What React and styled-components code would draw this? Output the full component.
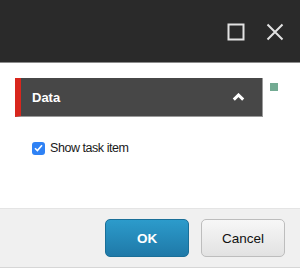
import React from 'react'
import styled, { createGlobalStyle } from 'styled-components'

const GlobalStyle = createGlobalStyle`
	html, body {
		margin: 0;
		padding: 0;
		background: #ffffff;
	}
	body {
		font-family: "Liberation Sans", Arial, sans-serif;
	}
`

const Dialog = styled.div`
	width: 300px;
	height: 269px;
	display: flex;
	flex-direction: column;
	background: #ffffff;
`

const TitleBar = styled.div`
	height: 62px;
	flex: none;
	background: #2a2a2a;
	border-bottom: 1px solid #8c8c8c;
	display: flex;
	align-items: center;
	justify-content: flex-end;
	gap: 20px;
	padding-right: 16px;
`

const WindowButton = styled.button`
	width: 19px;
	height: 19px;
	padding: 0;
	border: 0;
	background: none;
	display: flex;
	align-items: center;
	justify-content: center;
	color: #e2e2e2;
	margin-top: 2px;
`

const Body = styled.div`
	flex: 1;
	padding: 15px 0 0 15px;
`

const PanelRow = styled.div`
	display: flex;
	align-items: flex-start;
	gap: 7px;
`

const Panel = styled.div`
	width: 248px;
	height: 39px;
	box-sizing: border-box;
	background: #474747;
	border-left: 6px solid #d8261d;
	border-bottom: 1px solid #9a9a9a;
	border-right: 1px solid #9a9a9a;
	display: flex;
	align-items: center;
	justify-content: space-between;
	padding: 0 17px 0 11px;
`

const PanelTitle = styled.span`
	color: #ffffff;
	font-size: 13px;
	font-weight: bold;
`

const Marker = styled.div`
	width: 8px;
	height: 8px;
	margin-top: 5px;
	background: #73ab93;
`

const CheckRow = styled.label`
	display: flex;
	align-items: center;
	gap: 5px;
	margin: 24px 0 0 17px;
	color: #1a1a1a;
	font-size: 12.5px;
	letter-spacing: -0.45px;
`

const Box = styled.span`
	width: 13px;
	height: 13px;
	border-radius: 3px;
	background: #2f82f5;
	display: flex;
	align-items: center;
	justify-content: center;
`

const Footer = styled.div`
	height: 58px;
	flex: none;
	margin-bottom: 1px;
	background: #f0f0f0;
	border-top: 1px solid #e4e4e4;
	border-bottom: 1px solid #d6d6d6;
	display: flex;
	align-items: center;
	justify-content: flex-end;
	gap: 12px;
	padding-right: 15px;
`

const Button = styled.button`
	width: 84px;
	height: 38px;
	border-radius: 5px;
	font-family: "Liberation Sans", Arial, sans-serif;
	font-size: 13.5px;
	cursor: pointer;
	border: 1px solid ${p => (p.$primary ? '#1a6f98' : '#bdbdbd')};
	background: ${p =>
		p.$primary
			? 'linear-gradient(#2c9bcb, #1f79a8)'
			: 'linear-gradient(#f7f7f7, #e2e2e2)'};
	color: ${p => (p.$primary ? '#ffffff' : '#111111')};
	font-weight: ${p => (p.$primary ? 'bold' : 'normal')};
`

const App = () => {
	return (
		<Dialog>
			<GlobalStyle />
			<TitleBar>
				<WindowButton aria-label="Maximize">
					<svg width="18" height="18" viewBox="0 0 18 18">
						<rect x="1.5" y="1.5" width="15" height="15" fill="none" stroke="currentColor" strokeWidth="2" />
					</svg>
				</WindowButton>
				<WindowButton aria-label="Close">
					<svg width="18" height="18" viewBox="0 0 18 18">
						<path d="M1.5 1.5 L16.5 16.5 M16.5 1.5 L1.5 16.5" stroke="currentColor" strokeWidth="2" />
					</svg>
				</WindowButton>
			</TitleBar>
			<Body>
				<PanelRow>
					<Panel>
						<PanelTitle>Data</PanelTitle>
						<svg width="13" height="8" viewBox="0 0 13 8">
							<path d="M1.8 6.6 L6.5 2 L11.2 6.6" fill="none" stroke="#ffffff" strokeWidth="3" />
						</svg>
					</Panel>
					<Marker />
				</PanelRow>
				<CheckRow>
					<Box>
						<svg width="9" height="8" viewBox="0 0 9 8">
							<path d="M1 4.2 L3.4 6.6 L8 1.2" fill="none" stroke="#ffffff" strokeWidth="1.6" />
						</svg>
					</Box>
					Show task item
				</CheckRow>
			</Body>
			<Footer>
				<Button $primary>OK</Button>
				<Button>Cancel</Button>
			</Footer>
		</Dialog>
	)
}

export default App
